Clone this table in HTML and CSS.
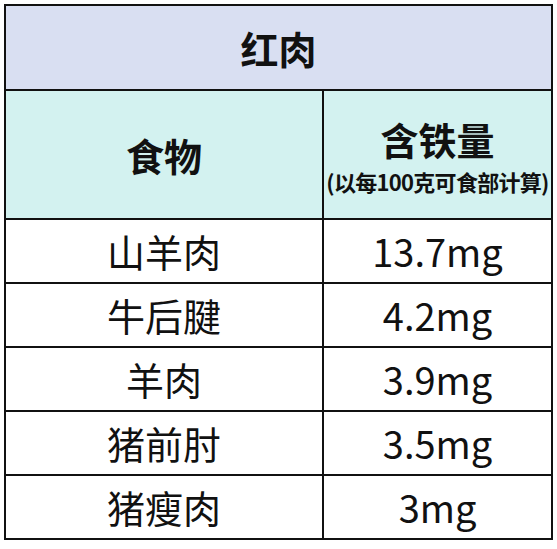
FILE: index.html
```html
<!DOCTYPE html>
<html lang="zh-CN">
<head>
<meta charset="utf-8">
<link rel="stylesheet" href="styles.css">
</head>
<body>
<table class="iron">
  <colgroup><col class="col-food"><col class="col-iron"></colgroup>
  <tr class="title-row"><td colspan="2" class="title">红肉</td></tr>
  <tr class="head-row">
    <td class="head">食物</td>
    <td class="head"><div class="head-main">含铁量</div><div class="head-sub">(以每100克可食部计算)</div></td>
  </tr>
  <tr class="row first"><td>山羊肉</td><td>13.7mg</td></tr>
  <tr class="row"><td>牛后腱</td><td>4.2mg</td></tr>
  <tr class="row"><td>羊肉</td><td>3.9mg</td></tr>
  <tr class="row"><td>猪前肘</td><td>3.5mg</td></tr>
  <tr class="row"><td>猪瘦肉</td><td>3mg</td></tr>
</table>
</body>
</html>
```

FILE: styles.css
```css
html, body {
  margin: 0;
  padding: 0;
  background: #ffffff;
}
body {
  padding: 4px 0 0 4px;
  font-family: "Noto Sans CJK SC", "Noto Sans", sans-serif;
  color: #111111;
}
.iron {
  border-collapse: collapse;
  width: 547px;
  table-layout: fixed;
}
.col-food {
  width: 318px;
}
.col-iron {
  width: 229px;
}
.iron td {
  border: 2px solid #111111;
  text-align: center;
  vertical-align: middle;
  padding: 0;
  font-size: 38px;
  line-height: 1;
}
.title-row td {
  height: 83px;
  background: #d9dff2;
  font-weight: 700;
}
.head-row td {
  height: 127px;
  background: #d3f2f0;
  font-weight: 700;
}
.head-main {
  font-size: 38px;
  line-height: 1;
  margin-top: 2px;
}
.head-sub {
  font-size: 22px;
  line-height: 1;
  margin-top: 12px;
  font-weight: 700;
  letter-spacing: -0.7px;
}
.row td {
  height: 62px;
}
```
